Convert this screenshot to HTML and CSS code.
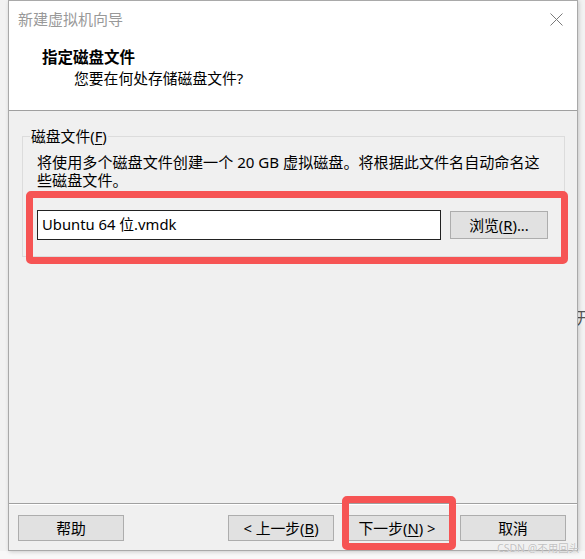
FILE: index.html
```html
<!DOCTYPE html>
<html lang="zh-CN">
<head>
<meta charset="utf-8">
<title>新建虚拟机向导</title>
<link rel="stylesheet" href="styles.css">
</head>
<body>
<span class="bg-glyph">开</span>
<div class="dialog">
  <div class="header">
    <div class="titlebar">
      <span class="title">新建虚拟机向导</span>
      <svg class="close" width="13" height="13" viewBox="0 0 13 13"><path d="M0.5 0.5 L12.5 12.5 M12.5 0.5 L0.5 12.5" stroke="#7a7a7a" stroke-width="1" fill="none"/></svg>
    </div>
    <div class="heading">指定磁盘文件</div>
    <div class="subtitle">您要在何处存储磁盘文件?</div>
  </div>
  <div class="body">
    <fieldset class="group">
      <legend>磁盘文件(<u>F</u>)</legend>
      <p class="desc">将使用多个磁盘文件创建一个 20 GB 虚拟磁盘。将根据此文件名自动命名这<br>些磁盘文件。</p>
      <div class="row">
        <div class="input">Ubuntu 64 位.vmdk</div>
        <button class="btn browse">浏览(<u>R</u>)...</button>
      </div>
    </fieldset>
  </div>
  <div class="footer">
    <button class="btn">帮助</button>
    <div class="spacer"></div>
    <button class="btn">&lt; 上一步(<u>B</u>)</button>
    <button class="btn">下一步(<u>N</u>) &gt;</button>
    <button class="btn">取消</button>
  </div>
  <div class="mark mark-file"></div>
  <div class="mark mark-next"></div>
</div>
<span class="watermark">CSDN @不用回头</span>
</body>
</html>
```

FILE: styles.css
```css
html {
  background: #f7f7f7;
}
body {
  margin: 0;
  width: 585px;
  height: 559px;
  overflow: hidden;
  position: relative;
  font-family: "Noto Sans", "Noto Sans CJK SC", sans-serif;
  font-size: 14.8px;
  color: #000;
  background: linear-gradient(#f2f2f2, #f2f2f2) no-repeat 0 0 / 585px 551px, #f8f8f8;
}
.bg-glyph {
  position: absolute;
  left: 576px;
  top: 308px;
  font-size: 16px;
  line-height: 20px;
  color: #555;
}
.dialog {
  position: relative;
  margin-left: 8px;
  width: 568px;
  height: 549px;
  border: 1px solid #a9a9a9;
  background: #f0f0f0;
  display: flex;
  flex-direction: column;
  box-shadow: 1px 1px 4px rgba(0,0,0,0.18);
}
.header {
  height: 109px;
  background: #fff;
  border-bottom: 1px solid #a0a0a0;
}
.titlebar {
  height: 36px;
  display: flex;
  align-items: center;
  justify-content: space-between;
  padding: 0 14px 0 9px;
}
.title {
  font-size: 15px;
  line-height: 36px;
  color: #999;
}
.close {
  display: block;
  margin-top: 1px;
}
.heading {
  margin: 10px 0 0 33px;
  font-size: 15.5px;
  font-weight: bold;
  line-height: 20px;
}
.subtitle {
  margin: 1px 0 0 65px;
  line-height: 20px;
}
.body {
  flex: 1;
  padding: 16px 12px 0 13px;
}
.group {
  margin: 0;
  border: 1px solid #dcdcdc;
  padding: 8px 14px 16px 14px;
}
.group legend {
  margin-left: -7px;
  padding: 0 1px;
  line-height: 18px;
}
.desc {
  margin: 0;
  font-size: 15.1px;
  line-height: 18px;
}
.row {
  display: flex;
  align-items: center;
  gap: 9px;
  margin-top: 21px;
}
.input {
  width: 394px;
  height: 28px;
  border: 1px solid #222;
  background: #fff;
  padding: 0 4px;
  line-height: 27px;
}
.btn {
  font-family: inherit;
  font-size: 14.8px;
  color: #000;
  width: 106px;
  height: 26px;
  padding: 0;
  border: 1px solid #adadad;
  background: #e1e1e1;
  line-height: 22px;
}
.browse {
  width: 98px;
  height: 28px;
}
.footer {
  height: 46px;
  border-top: 1px solid #a0a0a0;
  box-shadow: inset 0 1px 0 #fff;
  display: flex;
  align-items: flex-start;
  gap: 10px;
  padding: 0 11px 0 9px;
}
.footer .btn {
  margin-top: 11px;
}
.spacer {
  flex: 1;
}
.mark {
  position: absolute;
  border: 7px solid #f65454;
  border-radius: 5px;
  pointer-events: none;
}
.mark-file {
  left: 17px;
  top: 190px;
  width: 528px;
  height: 59px;
}
.mark-next {
  left: 333px;
  top: 495px;
  width: 100px;
  height: 40px;
}
.watermark {
  position: absolute;
  left: 497px;
  top: 541px;
  font-size: 10.5px;
  line-height: 14px;
  color: rgba(185,185,185,0.9);
  text-shadow: 0 0 1px #fff;
  white-space: nowrap;
}
u {
  text-underline-offset: 2px;
}
```
